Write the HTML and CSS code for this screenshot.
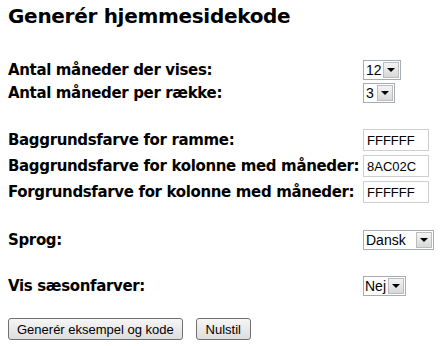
FILE: index.html
```html
<!DOCTYPE html>
<html>
<head>
    <meta charset="utf-8">
    <title>Generér hjemmesidekode</title>
    <link rel="stylesheet" href="styles.css">
</head>
<body>
<h1 class="page-title">Generér hjemmesidekode</h1>
<form class="code-form" method="post">
    <div class="form-row">
        <label class="row-label">Antal måneder der vises:</label>
        <span class="sel sel-12"><select><option>12</option></select></span>
    </div>
    <div class="form-row">
        <label class="row-label">Antal måneder per række:</label>
        <span class="sel sel-3"><select><option>3</option></select></span>
    </div>
    <div class="form-gap"></div>
    <div class="form-row tall">
        <label class="row-label">Baggrundsfarve for ramme:</label>
        <input class="color-input" type="text" value="FFFFFF">
    </div>
    <div class="form-row tall">
        <label class="row-label">Baggrundsfarve for kolonne med måneder:</label>
        <input class="color-input" type="text" value="8AC02C">
    </div>
    <div class="form-row tall">
        <label class="row-label">Forgrundsfarve for kolonne med måneder:</label>
        <input class="color-input" type="text" value="FFFFFF">
    </div>
    <div class="form-gap"></div>
    <div class="form-row">
        <label class="row-label">Sprog:</label>
        <span class="sel sel-lang"><select><option>Dansk</option></select></span>
    </div>
    <div class="form-gap"></div>
    <div class="form-row">
        <label class="row-label">Vis sæsonfarver:</label>
        <span class="sel sel-nej"><select><option>Nej</option></select></span>
    </div>
    <div class="form-buttons">
        <button type="button" class="btn">Generér eksempel og kode</button>
        <button type="reset" class="btn btn-reset">Nulstil</button>
    </div>
</form>
</body>
</html>
```

FILE: styles.css
```css
body{
    margin: 0;
    padding: 0 8px;
    background: #fff;
    color: #000;
    font-family: "DejaVu Sans", Verdana, sans-serif;
}
.page-title{
    margin: 0;
    padding: 6px 0 0 0;
    font-size: 20px;
    line-height: 20px;
    font-weight: bold;
    letter-spacing: -0.3px;
}
.code-form{
    margin: 32px 0 0 0;
}
.form-row{
    display: flex;
    align-items: center;
    height: 23px;
}
.form-row.tall{
    height: 26px;
}
.form-gap{
    height: 23px;
}
.row-label{
    width: 355px;
    font-size: 15px;
    font-weight: bold;
    letter-spacing: -0.35px;
    white-space: nowrap;
}
.sel{
    position: relative;
    display: inline-block;
    height: 20px;
}
.sel select{
    -webkit-appearance: none;
    appearance: none;
    height: 20px;
    margin: 0;
    padding: 0 0 0 2px;
    border: 1px solid #a5acb2;
    border-radius: 0;
    background: #fff;
    font-family: "Liberation Sans", Arial, sans-serif;
    font-size: 14px;
    color: #000;
}
.sel::after{
    content: "";
    position: absolute;
    top: 2px;
    right: 2px;
    width: 14px;
    height: 14px;
    border: 1px solid #bcbcbc;
    background: linear-gradient(#f4f4f4, #d8d8d8);
    pointer-events: none;
}
.sel::before{
    content: "";
    position: absolute;
    top: 8px;
    right: 6px;
    width: 0;
    height: 0;
    border-left: 4px solid transparent;
    border-right: 4px solid transparent;
    border-top: 4px solid #000;
    z-index: 1;
    pointer-events: none;
}
.sel-12 select{ width: 38px; }
.sel-3 select{ width: 32px; }
.sel-lang select{ width: 71px; }
.sel-nej select{ width: 43px; padding-left: 1px; }
.color-input{
    width: 66px;
    height: 22px;
    box-sizing: border-box;
    margin: 0;
    padding: 0 3px;
    border: 1px solid #cfcfcf;
    font-family: "Liberation Sans", Arial, sans-serif;
    font-size: 13px;
}
.form-buttons{
    display: flex;
    gap: 13px;
    margin-top: 21px;
}
.btn{
    height: 22px;
    margin: 0;
    padding: 0 8px;
    border: 1px solid #707070;
    border-radius: 3px;
    background: linear-gradient(#f6f6f6, #dddddd);
    font-family: "Liberation Sans", Arial, sans-serif;
    font-size: 13px;
    color: #000;
}
.btn-reset{
    width: 55px;
    padding: 0;
}
```
